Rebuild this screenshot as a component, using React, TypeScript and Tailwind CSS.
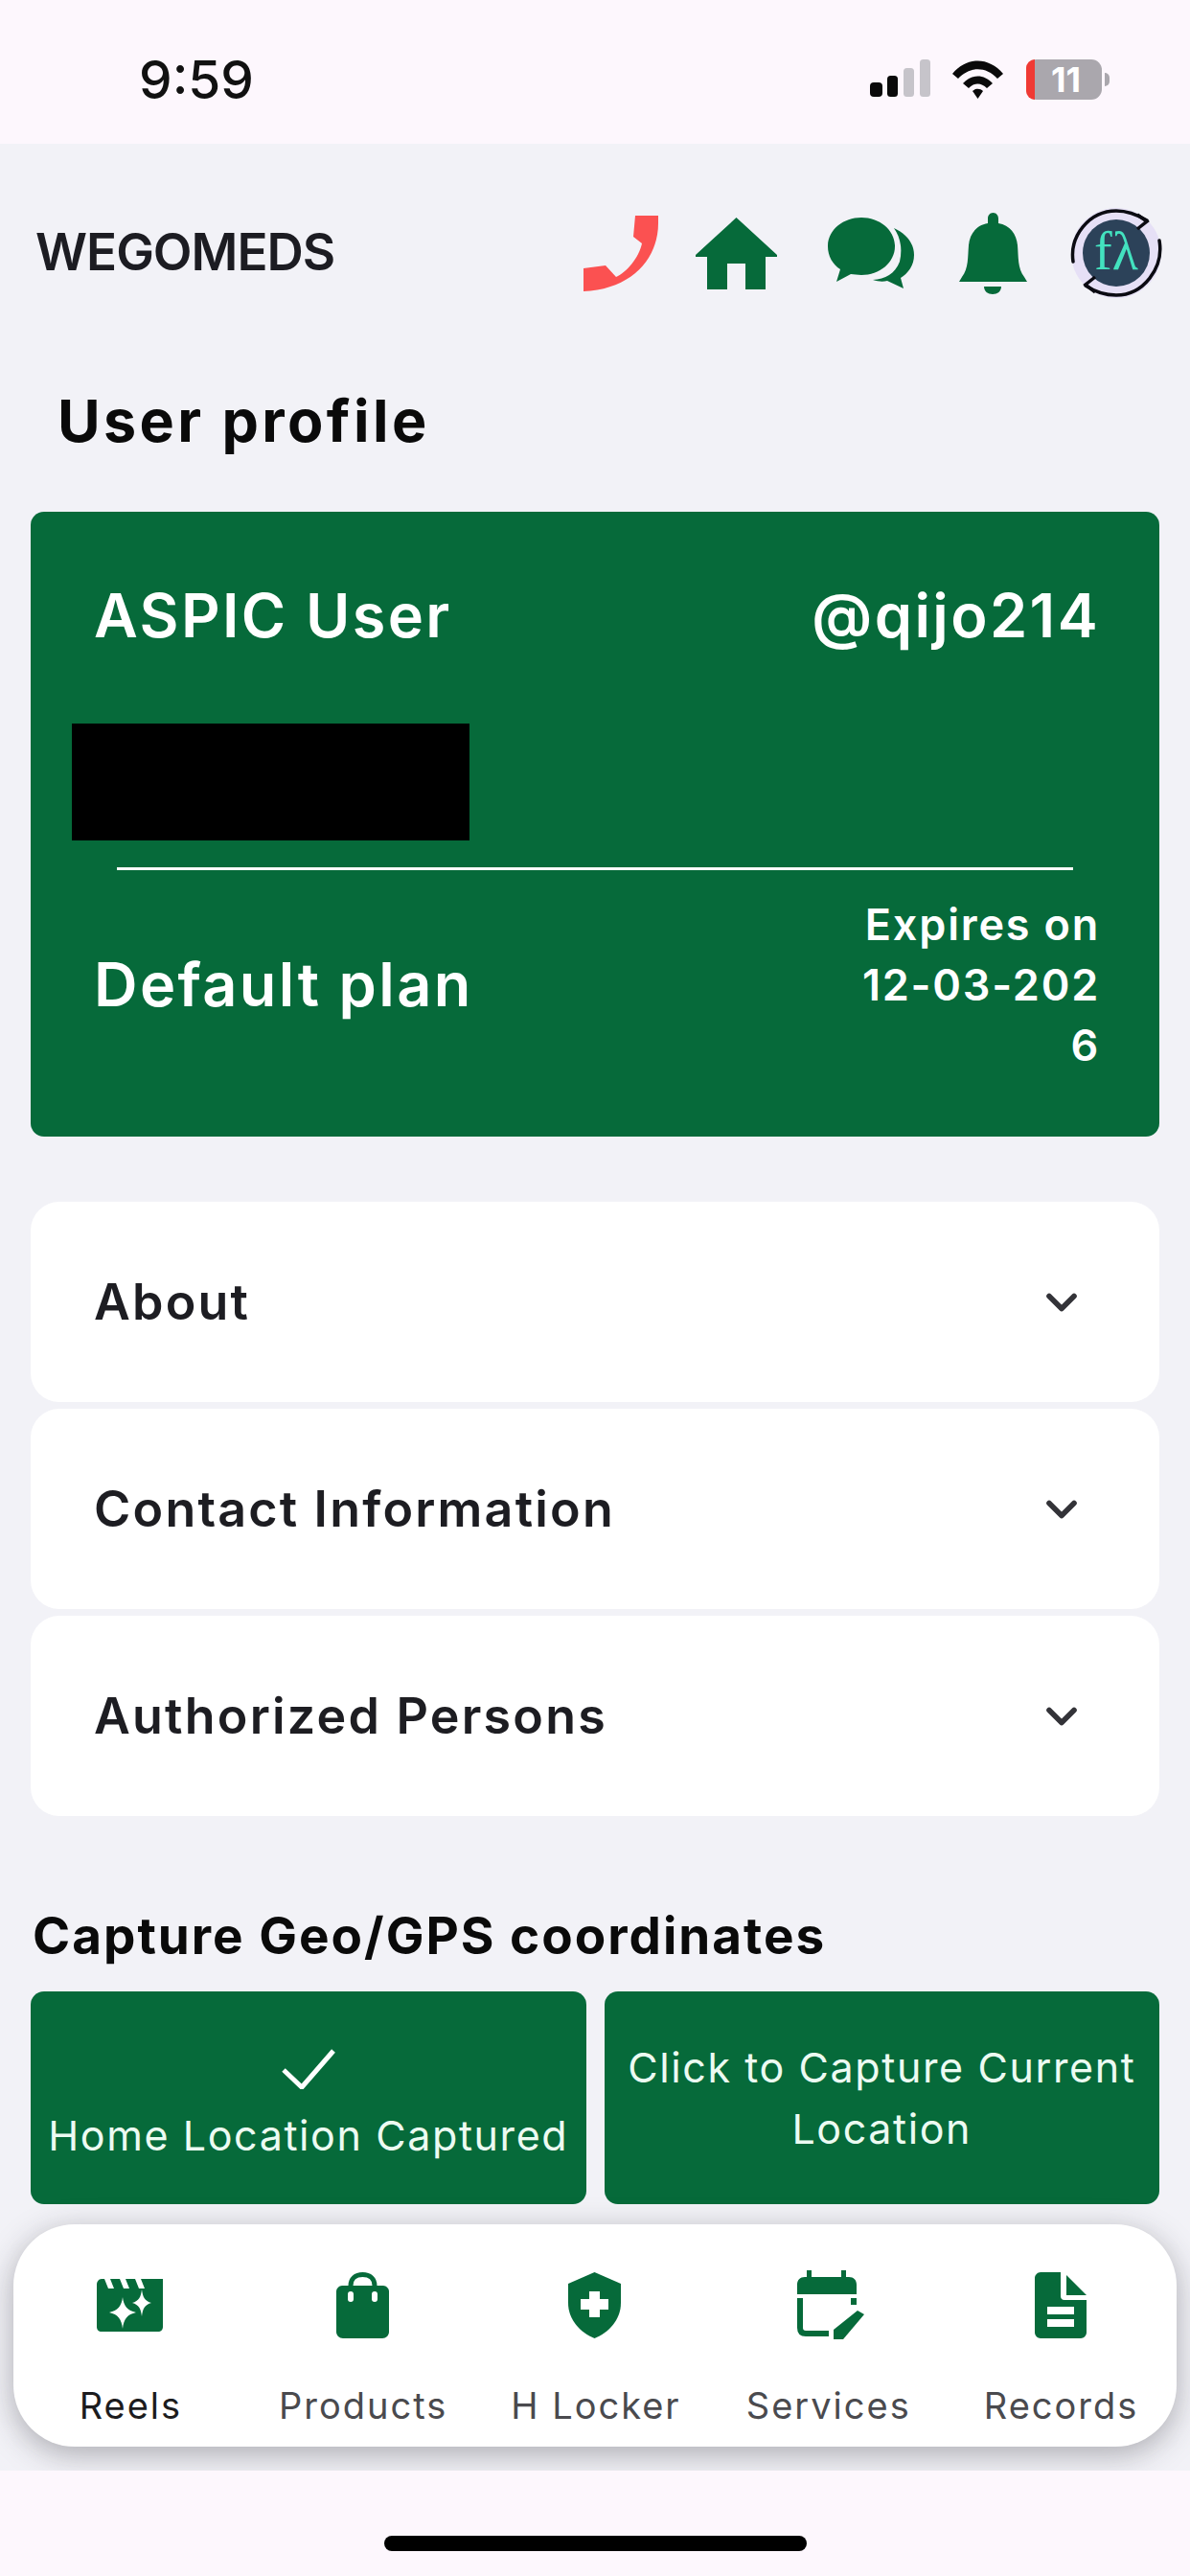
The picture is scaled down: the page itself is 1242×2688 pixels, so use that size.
import React from "react";
import { ChevronDown } from "lucide-react";

const G = "#066a3a";

function Phone() {
  return (
    <svg width="78" height="79" viewBox="0 0 78 79" className="block shrink-0">
      <path d="M54 0H78V8C78 45 50 77 0 79V55L23 52L34 64C45 59 58 44 61 29L52 22Z" fill="#fb5151" />
    </svg>
  );
}
function Home() {
  return (
    <svg width="85" height="75" viewBox="0 0 85 75" className="block shrink-0">
      <path d="M42.5 0L85 39V41H73V75H52V48H33V75H12V41H0V39Z" fill={G} />
    </svg>
  );
}
function Chat() {
  return (
    <svg width="91" height="75" viewBox="0 0 91 75" className="block shrink-0">
      <path d="M69 11C82 17 90 27 90 39C90 50 84 58 76 63L79 74L62 66C58 67 53 67 47 65C60 64 70 59 75 46C78 33 76 21 69 11Z" fill={G} />
      <path d="M35 0C54 0 70 13 70 30C70 47 54 60 35 60C31 60 27 59 24 59L9 67L13 54C5 49 0 40 0 30C0 13 16 0 35 0Z" fill={G} />
    </svg>
  );
}
function Bell() {
  return (
    <svg width="71" height="85" viewBox="0 0 71 85" className="block shrink-0">
      <path d="M35.5 0C39 0 41 3 41 6V11C53 13 60 22 61 34C62 46 61 58 68 67L71 72H0L3 67C10 58 9 46 10 34C11 22 18 13 30 11V6C30 3 32 0 35.5 0Z" fill={G} />
      <path d="M26 77H44C44 82 40 85 35 85C30 85 26 82 26 77Z" fill={G} />
    </svg>
  );
}
function Avatar() {
  return (
    <svg width="97" height="96" viewBox="0 0 97 96" className="block shrink-0">
      <circle cx="48" cy="48" r="47" fill="#e6e0f6" />
      <circle cx="48" cy="48" r="35" fill="#2c4259" />
      <path d="M3 57C-1 30 20 4 48 4C60 4 70 8 80 14" fill="none" stroke="#0b0b12" strokeWidth="3.5" strokeLinecap="round" />
      <path d="M70 8L80 15L70 23" fill="none" stroke="#0b0b12" strokeWidth="3.5" />
      <path d="M93 35C98 64 76 92 48 92C36 92 25 88 16 82" fill="none" stroke="#0b0b12" strokeWidth="3.5" strokeLinecap="round" />
      <path d="M26 73L16 81L26 89" fill="none" stroke="#0b0b12" strokeWidth="3.5" />
      <text x="48" y="65" textAnchor="middle" fill="#43e2bf" fontSize="56" fontFamily="'Liberation Serif', serif">fλ</text>
    </svg>
  );
}

function Reels() {
  return (
    <svg width="69" height="55" viewBox="0 0 69 55" className="block">
      <path d="M0 6C0 3 2 0 5 0H8L12 10H18L14 0H24L28 10H34L30 0H40L44 10H50L46 0H69V50C69 53 67 55 64 55H5C2 55 0 53 0 50Z" fill={G} />
      <path d="M27 19C28 28 32 33 41 35C32 37 28 42 27 52C26 42 22 37 13 35C22 33 26 28 27 19Z" fill="#fff" />
      <path d="M47 11C48 19 50 23 57 25C50 27 48 31 47 39C46 31 44 27 37 25C44 23 46 19 47 11Z" fill="#fff" />
    </svg>
  );
}
function Bag() {
  return (
    <svg width="55" height="69" viewBox="0 0 55 69" className="block">
      <path d="M15 24V14C15 7 20 2.500 27.500 2.500C35 2.500 40 7 40 14V24" fill="none" stroke={G} strokeWidth="5" />
      <path d="M6 14H49C52 14 55 17 55 20V62C55 66 52 69 48 69H7C3 69 0 66 0 62V20C0 17 3 14 6 14Z" fill={G} />
      <rect x="12" y="20" width="6" height="11" rx="3" fill="#fff" />
      <rect x="37" y="20" width="6" height="11" rx="3" fill="#fff" />
    </svg>
  );
}
function Shield() {
  return (
    <svg width="55" height="69" viewBox="0 0 55 69" className="block">
      <path d="M27.500 0L55 12V32C55 50 42 63 27.500 69C13 63 0 50 0 32V12Z" fill={G} />
      <path d="M22 20H33V28H42V39H33V47H22V39H13V28H22Z" fill="#fff" />
    </svg>
  );
}
function Calendar() {
  return (
    <svg width="70" height="73" viewBox="0 0 70 73" className="block ml-[6px]">
      <path d="M10 0H15V7H46V0H51V7H54C59 7 62 10 62 15V25H0V15C0 10 3 7 8 7H10Z" fill={G} />
      <path d="M3 29V60C3 64 5 66 9 66H33" fill="none" stroke={G} strokeWidth="6" />
      <path d="M59 29V36" fill="none" stroke={G} strokeWidth="6" />
      <path d="M63 42L70 46L48 72H38V62Z" fill={G} />
    </svg>
  );
}
function Doc() {
  return (
    <svg width="54" height="69" viewBox="0 0 54 69" className="block">
      <path d="M6 0H27V25C27 27 28 29 31 29H54V63C54 66 51 69 48 69H6C3 69 0 66 0 63V6C0 3 3 0 6 0Z" fill={G} />
      <path d="M33 3L54 24H33Z" fill={G} />
      <rect x="13" y="36" width="28" height="8" fill="#fff" />
      <rect x="13" y="49" width="28" height="8" fill="#fff" />
    </svg>
  );
}

function Row({ label }: { label: string }) {
  return (
    <div className="h-[209px] bg-white rounded-[30px] flex items-center justify-between pl-[66px] pr-[76px]">
      <span className="text-[52px] font-semibold tracking-[2.2px] text-[#1d1d22]">{label}</span>
      <ChevronDown size={52} strokeWidth={2.6} color="#333338" />
    </div>
  );
}

function Tab({ label, active, children }: { label: string; active?: boolean; children: React.ReactNode }) {
  return (
    <div className="flex-1 flex flex-col items-center">
      <div className="h-[80px] flex items-center justify-center">{children}</div>
      <span className={`mt-[40px] ml-[2px] text-[38px] leading-[50px] tracking-[2px] ${active ? "text-[#1c1c1e]" : "text-[#4a4a4e]"}`}>{label}</span>
    </div>
  );
}

export default function App() {
  return (
    <div className="w-[1242px] h-[2688px] flex flex-col bg-[#fdf7fd] overflow-hidden font-['Inter',sans-serif]">
      <div className="h-[150px] shrink-0 relative flex items-center justify-between pl-[145px] pr-[84px] pt-[15px]">
        <span className="text-[55px] font-medium text-[#111] leading-[60px]">9:59</span>
        <div className="flex items-center">
          <svg width="64" height="42" viewBox="0 0 64 42" className="block">
            <rect x="0" y="24" width="13" height="15" rx="4" fill="#0a0a0a" />
            <rect x="18" y="17" width="11" height="22" rx="3.500" fill="#0a0a0a" />
            <rect x="35" y="9" width="11" height="30" rx="3.500" fill="#c6c4ca" />
            <rect x="52" y="0" width="11" height="39" rx="3.500" fill="#c6c4ca" />
          </svg>
          <svg width="53" height="40" viewBox="0 0 53 40" className="block ml-[22px]">
            <path d="M0 14C15 -4 38 -4 53 14L47 19C35 6 18 6 6 19Z" fill="#0a0a0a" />
            <path d="M11 24C20 14 33 14 42 24L36 29C30 23 23 23 17 29Z" fill="#0a0a0a" />
            <path d="M21 32C24 29 29 29 32 32L26.500 40Z" fill="#0a0a0a" />
          </svg>
          <div className="ml-[24px] w-[79px] h-[42px] rounded-[11px] bg-[#aaa7ad] flex relative items-center justify-center">
            <div className="absolute left-0 top-0 bottom-0 w-[9px] rounded-l-[9px] bg-[#f03a34]" />
            <span className="text-[36px] font-bold text-white leading-[42px] ml-[4px]">11</span>
          </div>
          <div className="ml-[3px] w-[5px] h-[14px] rounded-r-full bg-[#aaa7ad]" />
        </div>
      </div>

      <div className="flex-1 bg-[#f2f2f7] flex flex-col">
        <div className="mt-[66px] h-[96px] flex items-center pl-[37px] pr-[28px]">
          <span className="flex-1 text-[53px] font-semibold tracking-[-1px] text-[#1c1c22]">WEGOMEDS</span>
          <Phone />
          <div className="ml-[39px]"><Home /></div>
          <div className="ml-[53px]"><Chat /></div>
          <div className="ml-[46px]"><Bell /></div>
          <div className="ml-[45px]"><Avatar /></div>
        </div>

        <div className="mt-[88px] h-[80px] pl-[60px] flex items-center">
          <span className="text-[61px] font-bold tracking-[3.4px] text-[#0a0a0a]">User profile</span>
        </div>

        <div className="mt-[54px] mx-[32px] h-[652px] bg-[#066a3a] rounded-[14px] text-white flex flex-col">
          <div className="mt-[72px] h-[72px] pl-[66px] pr-[62px] flex items-center justify-between text-[63px] font-semibold tracking-[2.4px]">
            <span>ASPIC User</span>
            <span>@qijo214</span>
          </div>
          <div className="mt-[77px] ml-[43px] w-[415px] h-[122px] bg-black" />
          <div className="mt-[28px] ml-[90px] w-[998px] h-[3px] bg-white" />
          <div className="mt-[25px] pl-[66px] pr-[62px] flex items-center justify-between">
            <span className="text-[63px] font-semibold tracking-[2.4px]">Default plan</span>
            <span className="text-right text-[45px] leading-[63px] font-semibold tracking-[1.8px]">Expires on<br />12-03-202<br />6</span>
          </div>
        </div>

        <div className="mt-[68px] mx-[32px] flex flex-col gap-[7px]">
          <Row label="About" />
          <Row label="Contact Information" />
          <Row label="Authorized Persons" />
        </div>

        <div className="mt-[96px] h-[60px] pl-[34px] flex items-center">
          <span className="text-[53px] font-bold tracking-[2px] text-[#0a0a0a]">Capture Geo/GPS coordinates</span>
        </div>

        <div className="mt-[27px] mx-[32px] flex gap-[19px] text-[#ecfbf2] text-[43px] leading-[64px] tracking-[1.6px]">
          <div className="flex-1 h-[222px] bg-[#066a3a] rounded-[14px] flex flex-col items-center pt-[60px]">
            <svg width="56" height="42" viewBox="0 0 56 42" className="block">
              <path d="M2 22L21 40L54 2" fill="none" stroke="#fff" strokeWidth="5" />
            </svg>
            <span className="mt-[16px]">Home Location Captured</span>
          </div>
          <div className="flex-1 h-[222px] bg-[#066a3a] rounded-[14px] flex items-center justify-center text-center">
            <span>Click to Capture Current<br />Location</span>
          </div>
        </div>

        <div className="relative mt-[21px] mx-[14px] h-[232px] bg-white rounded-[64px] shadow-[0_8px_32px_rgba(40,40,50,0.35)] flex pt-[44px]">
          <Tab label="Reels" active><Reels /></Tab>
          <Tab label="Products"><Bag /></Tab>
          <Tab label="H Locker"><Shield /></Tab>
          <Tab label="Services"><Calendar /></Tab>
          <Tab label="Records"><Doc /></Tab>
        </div>
      </div>

      <div className="h-[110px] shrink-0 relative z-10 bg-[#fdf7fd] flex justify-center pt-[68px]">
        <div className="w-[441px] h-[16px] rounded-full bg-black" />
      </div>
    </div>
  );
}
